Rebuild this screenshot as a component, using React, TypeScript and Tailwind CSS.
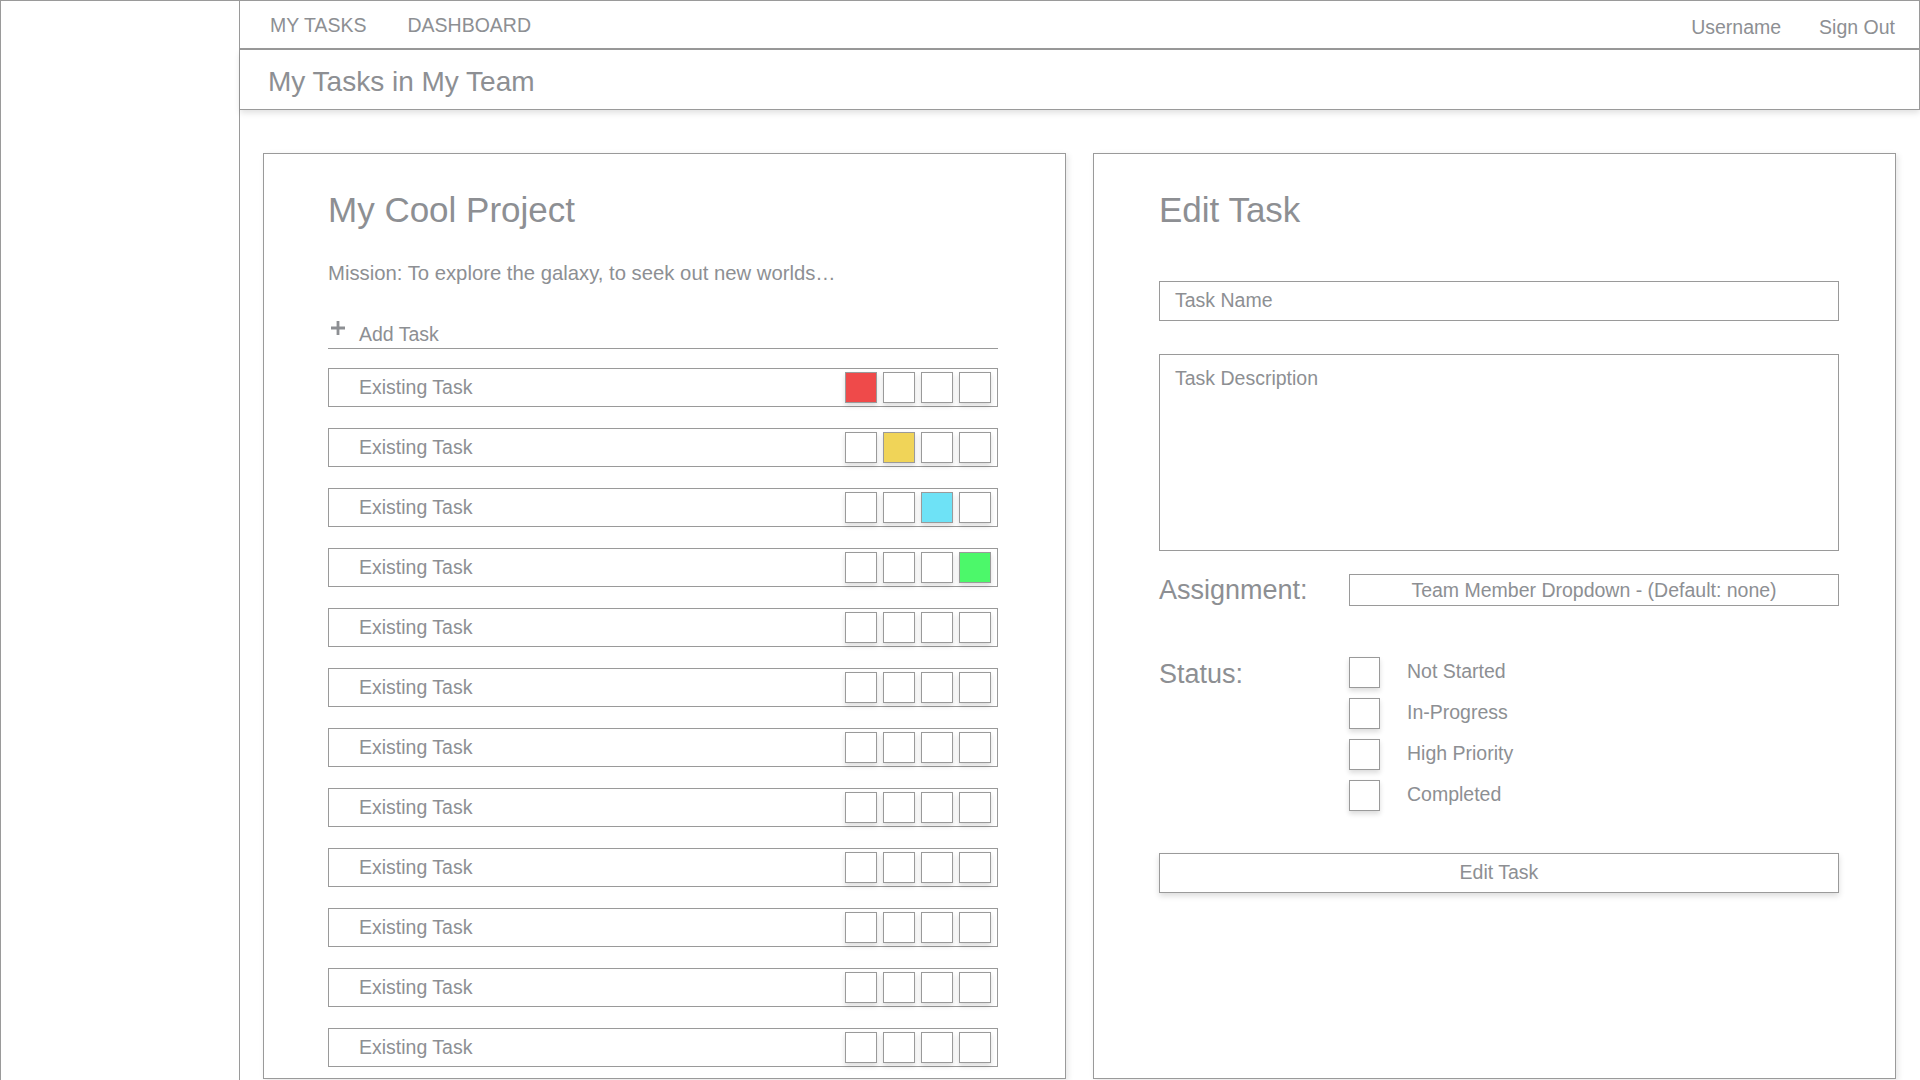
import React from "react"

const font = { fontFamily: '"Liberation Sans", Arial, sans-serif' }

// which colour box is filled on each row (index) and its colour
const tasks = [
  { filled: 0, color: "bg-[#ef4a4a]" },
  { filled: 1, color: "bg-[#f0d458]" },
  { filled: 2, color: "bg-[#6ee2f6]" },
  { filled: 3, color: "bg-[#4cf86a]" },
  { filled: -1, color: "" },
  { filled: -1, color: "" },
  { filled: -1, color: "" },
  { filled: -1, color: "" },
  { filled: -1, color: "" },
  { filled: -1, color: "" },
  { filled: -1, color: "" },
  { filled: -1, color: "" },
]

const statuses = ["Not Started", "In-Progress", "High Priority", "Completed"]

const TaskRow: React.FC<{ filled: number; color: string }> = ({ filled, color }) => (
  <div className="flex h-[39px] items-center justify-between border border-[#9a9a9a] pl-[30px] pr-[6px]">
    <span className="text-[19.5px]">Existing Task</span>
    <div className="flex gap-[6px]">
      {[0, 1, 2, 3].map((i) => (
        <div
          key={i}
          className={
            "h-[31px] w-[32px] border border-[#9a9a9a] shadow-[0_3px_5px_rgba(0,0,0,0.14)] " +
            (i === filled ? color : "bg-white")
          }
        />
      ))}
    </div>
  </div>
)

const App: React.FC = () => {
  return (
    <div style={font} className="flex h-[1080px] overflow-hidden bg-white text-[#8d8f93]">
      {/* Sidebar */}
      <aside className="w-[240px] shrink-0 border-l border-r border-t border-[#9a9a9a]" />

      <main className="flex min-w-0 flex-1 flex-col">
        {/* Top nav */}
        <nav className="flex h-[50px] items-start justify-between border-b-2 border-r border-t border-[#9a9a9a] pl-[30px] pr-[24px] text-[19.5px]">
          <div className="flex gap-[41px] pt-[10px]">
            <span>MY TASKS</span>
            <span>DASHBOARD</span>
          </div>
          <div className="flex gap-[38px] pt-[12px]">
            <span>Username</span>
            <span>Sign Out</span>
          </div>
        </nav>

        {/* Page header */}
        <header className="relative z-10 flex h-[60px] items-center border-b border-r border-[#9a9a9a] bg-white pl-[28px] pt-[5px] shadow-[0_3px_6px_rgba(0,0,0,0.12)]">
          <h1 className="text-[28px]">My Tasks in My Team</h1>
        </header>

        <div className="grid flex-1 grid-cols-2 gap-[27px] pb-[1px] pl-[23px] pr-[24px] pt-[43px]">
          {/* Project card */}
          <section className="min-w-0 border border-[#9a9a9a] pl-[64px] pr-[67px] pt-[34px] shadow-[2px_2px_6px_rgba(0,0,0,0.1)]">
            <h2 className="text-[35px] leading-[44px]">My Cool Project</h2>
            <p className="mt-[29px] text-[20.3px] leading-[24px]">
              Mission: To explore the galaxy, to seek out new worlds…
            </p>
            <div className="mt-[37px] flex h-[27px] items-start gap-[13px] border-b border-[#9a9a9a] pl-[2px]">
              <svg width="16" height="16" viewBox="0 0 16 16" className="mt-[-2px]">
                <path d="M8 1v14M1 8h14" stroke="#8d8f93" strokeWidth="2.8" />
              </svg>
              <span className="text-[19.5px] leading-[24px]">Add Task</span>
            </div>
            <div className="mt-[19px] flex flex-col gap-[21px]">
              {tasks.map((t, i) => (
                <TaskRow key={i} filled={t.filled} color={t.color} />
              ))}
            </div>
          </section>

          {/* Edit task card */}
          <section className="min-w-0 border border-[#9a9a9a] pl-[65px] pr-[56px] pt-[34px] shadow-[2px_2px_6px_rgba(0,0,0,0.1)]">
            <h2 className="text-[35px] leading-[44px]">Edit Task</h2>
            <div className="mt-[49px] flex h-[40px] items-center border border-[#9a9a9a] px-[15px] text-[19.5px]">
              Task Name
            </div>
            <div className="mt-[33px] h-[197px] border border-[#9a9a9a] px-[15px] pt-[11px] text-[19.5px] leading-[24px]">
              Task Description
            </div>

            <div className="mt-[19px] flex items-center">
              <span className="w-[190px] text-[27px]">Assignment:</span>
              <div className="flex h-[32px] flex-1 items-center justify-center border border-[#9a9a9a] text-[19.5px]">
                Team Member Dropdown - (Default: none)
              </div>
            </div>

            <div className="mt-[46px] flex">
              <span className="w-[190px] pt-[1px] text-[27px] leading-[32px]">Status:</span>
              <div className="flex flex-col gap-[10px]">
                {statuses.map((s) => (
                  <label key={s} className="flex items-center gap-[27px] text-[19.5px]">
                    <span className="h-[31px] w-[31px] border border-[#9a9a9a] shadow-[0_3px_5px_rgba(0,0,0,0.14)]" />
                    {s}
                  </label>
                ))}
              </div>
            </div>

            <button className="mt-[42px] flex h-[40px] w-full items-center justify-center border border-[#9a9a9a] text-[19.5px] text-[#8d8f93] shadow-[0_3px_6px_rgba(0,0,0,0.14)]">
              Edit Task
            </button>
          </section>
        </div>
      </main>
    </div>
  )
}

export default App
